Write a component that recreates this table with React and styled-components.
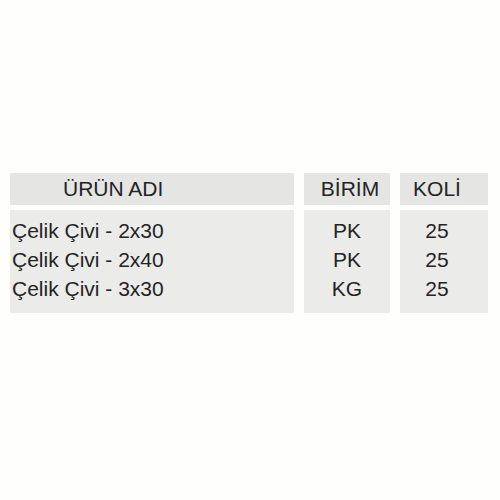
import React from "react";
import styled, { createGlobalStyle } from "styled-components";

const Global = createGlobalStyle`
  html, body { margin: 0; padding: 0; background: #fefefc; }
  body { font-family: "Liberation Sans", Arial, sans-serif; color: #242424; }
`;

const Page = styled.div`
  width: 500px;
  height: 500px;
  padding: 173px 0 0 10px;
  box-sizing: border-box;
`;

const Table = styled.div`
  display: grid;
  grid-template-columns: 284px 86px 88px;
  grid-template-rows: 32px 103px;
  column-gap: 10px;
  row-gap: 5px;
`;

const HeadCell = styled.div`
  background: #e5e5e4;
  font-size: 21px;
  line-height: 32px;
  text-align: ${(p) => (p.$left ? "left" : "center")};
  padding-left: ${(p) => p.$pad || 0}px;
  padding-right: ${(p) => p.$padR || 0}px;
  white-space: nowrap;
`;

const BodyCell = styled.div`
  background: #ebebea;
  font-size: 21px;
  line-height: 29px;
  padding: 6px ${(p) => p.$padR || 0}px 0 ${(p) => p.$pad || 0}px;
  text-align: ${(p) => (p.$left ? "left" : "center")};
  box-sizing: border-box;
`;

const Line = styled.div`
  white-space: nowrap;
`;

const rows = [
  ["Çelik Çivi - 2x30", "PK", "25"],
  ["Çelik Çivi - 2x40", "PK", "25"],
  ["Çelik Çivi - 3x30", "KG", "25"],
];

export default function App() {
  return (
    <>
      <Global />
      <Page>
        <Table>
          <HeadCell $left $pad={53}>ÜRÜN ADI</HeadCell>
          <HeadCell $pad={6}>BİRİM</HeadCell>
          <HeadCell $padR={14}>KOLİ</HeadCell>
          <BodyCell $left $pad={2}>
            {rows.map((r, i) => <Line key={i}>{r[0]}</Line>)}
          </BodyCell>
          <BodyCell>
            {rows.map((r, i) => <Line key={i}>{r[1]}</Line>)}
          </BodyCell>
          <BodyCell $padR={14}>
            {rows.map((r, i) => <Line key={i}>{r[2]}</Line>)}
          </BodyCell>
        </Table>
      </Page>
    </>
  );
}
